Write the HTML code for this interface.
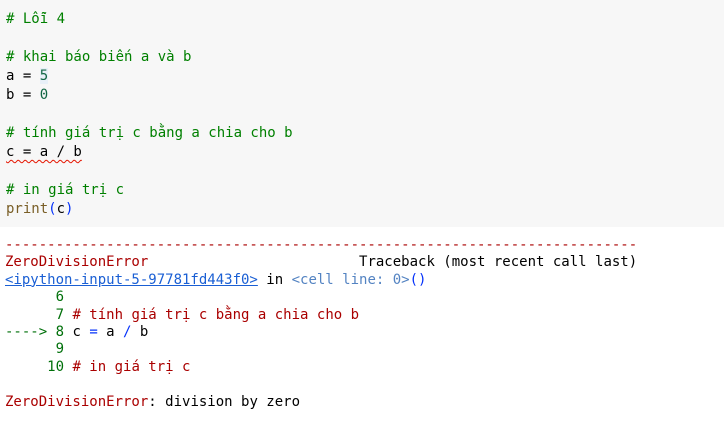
<!DOCTYPE html>
<html><head><meta charset="utf-8"><style>
html,body{margin:0;padding:0;background:#fff;width:724px;height:428px;overflow:hidden}
.code{position:absolute;left:0;top:0;width:724px;height:227px;background:#f7f7f7}
pre{margin:0;font-family:"DejaVu Sans Mono","Liberation Mono",monospace;font-size:14px;white-space:pre}
.code pre{position:absolute;left:6px;top:10px;line-height:19px;color:#000}
.out pre{position:absolute;left:5px;top:237px;line-height:17.4px;color:#000}
.c{color:#008000}.n{color:#116644}.f{color:#795e26}.p{color:#0431fa}
.sq{text-decoration:underline wavy #e51400;text-decoration-thickness:1px;text-underline-offset:3px}
.r{color:#a00}.g{color:#00700a}.l{color:#1a5fd4;text-decoration:underline}.gr{color:#5383c2}
</style></head><body>
<div class="code"><pre><span class="c"># Lỗi 4</span>

<span class="c"># khai báo biến a và b</span>
a = <span class="n" style="background:#e8f0f8">5</span>
b = <span class="n">0</span>

<span class="c"># tính giá trị c bằng a chia cho b</span>
<span class="sq">c = a / b</span>

<span class="c"># in giá trị c</span>
<span class="f">print</span><span class="p">(</span>c<span class="p">)</span></pre></div>
<div class="out"><pre><span class="r">---------------------------------------------------------------------------</span>
<span class="r">ZeroDivisionError</span>                         Traceback (most recent call last)
<span class="l">&lt;ipython-input-5-97781fd443f0&gt;</span> in <span class="gr">&lt;cell line: 0&gt;</span><span class="p">()</span>
<span class="g">      6</span>
<span class="g">      7</span> <span class="r"># tính giá trị c bằng a chia cho b</span>
<span class="g">----&gt; 8</span> c <span class="p">=</span> a <span class="p">/</span> b
<span class="g">      9</span>
<span class="g">     10</span> <span class="r"># in giá trị c</span>

<span class="r">ZeroDivisionError</span>: division by zero</pre></div>
</body></html>
